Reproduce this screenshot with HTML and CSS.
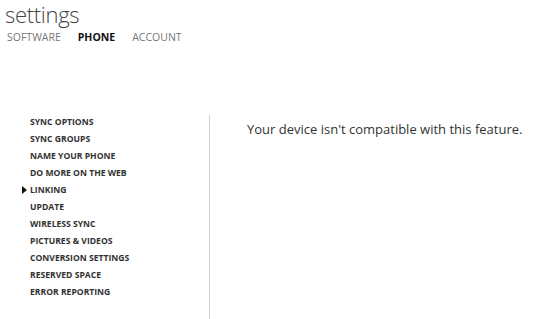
FILE: index.html
```html
<!DOCTYPE html>
<html lang="en">
<head>
  <meta charset="UTF-8" />
  <title>settings</title>
  <link rel="stylesheet" href="styles.css">
</head>
<body>
  <div class="header">
    <h1 class="title">settings</h1>
    <div class="tabs">
      <span class="tab">SOFTWARE</span>
      <span class="tab active">PHONE</span>
      <span class="tab">ACCOUNT</span>
    </div>
  </div>

  <div class="main">
    <ul class="side-menu">
      <li>SYNC OPTIONS</li>
      <li>SYNC GROUPS</li>
      <li>NAME YOUR PHONE</li>
      <li>DO MORE ON THE WEB</li>
      <li class="selected">LINKING</li>
      <li>UPDATE</li>
      <li>WIRELESS SYNC</li>
      <li>PICTURES &amp; VIDEOS</li>
      <li>CONVERSION SETTINGS</li>
      <li>RESERVED SPACE</li>
      <li>ERROR REPORTING</li>
    </ul>
    <div class="content">
      <p class="message">Your device isn't compatible with this feature.</p>
    </div>
  </div>
</body>
</html>
```

FILE: styles.css
```css
body {
  margin: 0;
  padding: 0;
  background-color: #ffffff;
  font-family: "Open Sans", "Noto Sans", Arial, sans-serif;
  color: #333333;
  overflow: hidden;
}

.header {
  padding-left: 5px;
}

.title {
  margin: 0;
  font-size: 22px;
  font-weight: 300;
  color: #444444;
  line-height: 29px;
  letter-spacing: -0.3px;
}

.tabs {
  display: flex;
  gap: 17px;
  margin-top: 1px;
  padding-left: 2px;
}

.tab {
  font-size: 10.5px;
  color: #777777;
  line-height: 14px;
}

.tab.active {
  font-weight: bold;
  color: #111111;
}

.main {
  display: flex;
  margin-top: 71px;
}

.side-menu {
  list-style: none;
  margin: 0;
  padding: 0 0 0 30px;
  width: 210px;
  box-sizing: border-box;
  border-right: 1px solid #d0d0d0;
  min-height: 204px;
}

.side-menu li {
  font-size: 8.6px;
  font-weight: bold;
  line-height: 17px;
  color: #333333;
  position: relative;
  white-space: nowrap;
}

.side-menu li:first-child {
  margin-top: -1px;
}

.side-menu li.selected::before {
  content: "";
  position: absolute;
  left: -8px;
  top: 4px;
  border-left: 5px solid #111111;
  border-top: 4px solid transparent;
  border-bottom: 4px solid transparent;
}

.content {
  padding-left: 37px;
}

.message {
  margin: 5px 0 0;
  font-size: 13px;
  color: #333333;
}
```
